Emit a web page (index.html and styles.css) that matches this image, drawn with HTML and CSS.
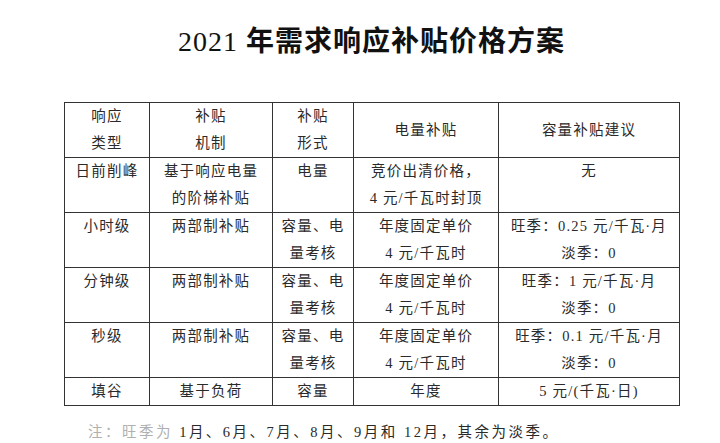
FILE: index.html
```html
<!DOCTYPE html>
<html lang="zh-CN">
<head>
<meta charset="utf-8">
<title>2021年需求响应补贴价格方案</title>
<link rel="stylesheet" href="styles.css">
</head>
<body>
<div class="page">
  <h1 class="title"><span class="num">2021</span> <span class="cn">年需求响应补贴价格方案</span></h1>
  <table class="plan">
    <colgroup>
      <col class="c1"><col class="c2"><col class="c3"><col class="c4"><col class="c5">
    </colgroup>
    <thead>
      <tr>
        <th>响应<br>类型</th>
        <th>补贴<br>机制</th>
        <th>补贴<br>形式</th>
        <th>电量补贴</th>
        <th>容量补贴建议</th>
      </tr>
    </thead>
    <tbody>
      <tr>
        <td>日前削峰</td>
        <td>基于响应电量<br>的阶梯补贴</td>
        <td>电量</td>
        <td>竞价出清价格，<br>4 元/千瓦时封顶</td>
        <td>无</td>
      </tr>
      <tr>
        <td>小时级</td>
        <td>两部制补贴</td>
        <td>容量、电<br>量考核</td>
        <td>年度固定单价<br>4 元/千瓦时</td>
        <td>旺季：0.25 元/千瓦·月<br>淡季：0</td>
      </tr>
      <tr>
        <td>分钟级</td>
        <td>两部制补贴</td>
        <td>容量、电<br>量考核</td>
        <td>年度固定单价<br>4 元/千瓦时</td>
        <td>旺季：1 元/千瓦·月<br>淡季：0</td>
      </tr>
      <tr>
        <td>秒级</td>
        <td>两部制补贴</td>
        <td>容量、电<br>量考核</td>
        <td>年度固定单价<br>4 元/千瓦时</td>
        <td>旺季：0.1 元/千瓦·月<br>淡季：0</td>
      </tr>
      <tr>
        <td>填谷</td>
        <td>基于负荷</td>
        <td>容量</td>
        <td>年度</td>
        <td>5 元/(千瓦·日)</td>
      </tr>
    </tbody>
  </table>
  <p class="note"><span class="faded">注：旺季为</span> 1月、6月、7月、8月、9月和 12月，其余为淡季。</p>
</div>
</body>
</html>
```

FILE: styles.css
```css
html, body {
  margin: 0;
  padding: 0;
  background: #ffffff;
}

.page {
  width: 615px;
  margin-left: 64px;
  font-family: "Liberation Serif", "Noto Sans CJK SC", serif;
  color: #2a2a2a;
}

.title {
  margin: 25px 0 0 0;
  height: 34px;
  line-height: 34px;
  font-size: 28px;
  text-align: center;
  color: #111111;
  font-weight: normal;
  letter-spacing: 1px;
}

.title .cn {
  font-weight: 700;
}

.plan {
  margin-top: 43px;
  width: 615px;
  border-collapse: collapse;
  table-layout: fixed;
  font-size: 14.5px;
  letter-spacing: 1.2px;
  line-height: 27px;
}

.c1 { width: 85px; }
.c2 { width: 123px; }
.c3 { width: 81px; }
.c4 { width: 145px; }
.c5 { width: 181px; }

.plan th,
.plan td {
  border: 1px solid #333333;
  padding: 0;
  text-align: center;
  font-weight: normal;
}

.plan th {
  vertical-align: middle;
  height: 53px;
}

.plan td {
  vertical-align: top;
}

.note {
  margin: 13px 0 0 24px;
  font-size: 14.5px;
  letter-spacing: 2.5px;
  line-height: 27px;
  color: #2a2a2a;
}

.note .faded {
  color: #b0b0b0;
}
```
